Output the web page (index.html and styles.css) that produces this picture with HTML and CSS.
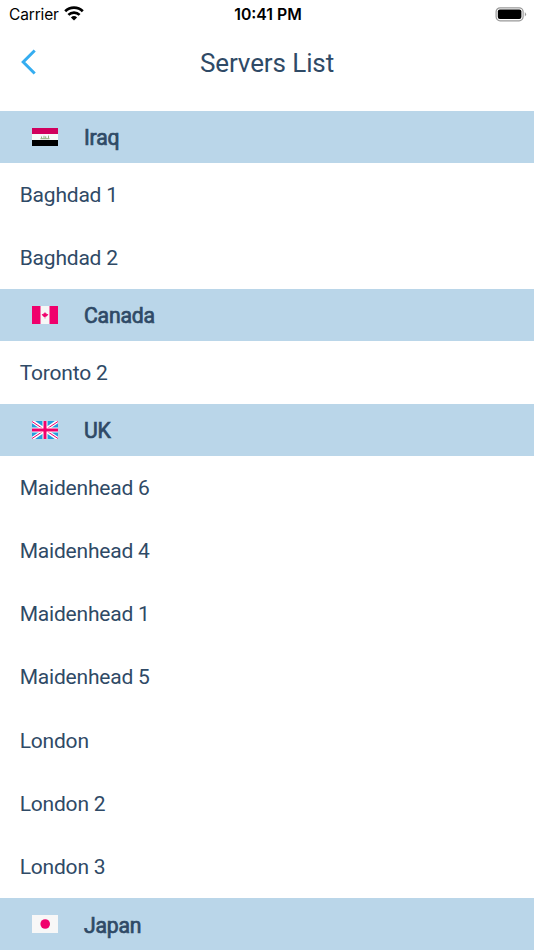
FILE: index.html
```html
<!DOCTYPE html>
<html lang="en">
<head>
<meta charset="utf-8">
<title>Servers List</title>
<link rel="stylesheet" href="styles.css">
</head>
<body>
<div class="status">
  <div class="carrier"><span>Carrier</span>
    <svg class="wifi" width="20" height="15" viewBox="0 0 20 15"><path d="M10 14.500 6.900 11.400a4.500 4.500 0 0 1 6.200 0Z" fill="#000"/><path d="M4.400 8.900a8 8 0 0 1 11.200 0M1.200 5.200a12.600 12.600 0 0 1 17.600 0" fill="none" stroke="#000" stroke-width="2.700"/></svg>
  </div>
  <div class="time">10:41 PM</div>
  <svg class="battery" width="32" height="15" viewBox="0 0 32 15"><rect x="1.100" y=".8" width="27" height="13" rx="4" fill="none" stroke="#999" stroke-width="1.200"/><rect x="2.800" y="2.500" width="23.600" height="9.600" rx="2"/><path d="M29.800 5q2.600 2.300 0 4.600Z" fill="#999"/></svg>
</div>
<header class="bar">
  <svg class="back" width="17" height="26" viewBox="0 0 17 26"><path d="M14.700 1.500 3.200 13 14.700 24.500" fill="none" stroke="#35adf0" stroke-width="3"/></svg>
  <h1>Servers List</h1>
</header>
<main>
  <section>
    <h2><svg class="flag" viewBox="0 0 26 18"><path fill="#f7f9f9" d="M0 0h26v18H0z"/><path fill="#d1005d" d="M0 0h26v6H0z"/><path d="M0 12h26v6H0z"/><path d="M8.500 10.600h9" stroke="#a3bd91" stroke-width="1.300"/><path d="M9.500 10.500V8.500M12 10.500V7.800M13.700 10.500V8.300M16.500 10.500V7.600" stroke="#94b283" stroke-width="1"/></svg><span>Iraq</span></h2>
    <div class="row">Baghdad 1</div>
    <div class="row">Baghdad 2</div>
  </section>
  <section>
    <h2><svg class="flag" viewBox="0 0 26 18"><path fill="#f7f7f7" d="M0 0h26v18H0z"/><path fill="#f0006c" d="M0 0h8.500v18H0zM17.500 0H26v18h-8.500zM13 6l.9 1.500.7-.3v1l1.700-.1-.5 1.200-1.700 1.500h-.8V12.500h-.6V11h-.8L10.200 9.300l-.5-1.200 1.700.1V7.200l.7.300z"/></svg><span>Canada</span></h2>
    <div class="row">Toronto 2</div>
  </section>
  <section>
    <h2><svg class="flag" viewBox="0 0 26 18"><path fill="#259bdc" d="M0 0h26v18H0z"/><path d="M0 0l26 18M26 0L0 18" stroke="#fff" stroke-width="3.500"/><path d="M0 .5l26 17M26 .5L0 17.500" stroke="#f0006c" stroke-width="1"/><path d="M13 0v18M0 9h26" stroke="#fff" stroke-width="5"/><path d="M13 0v18M0 9h26" stroke="#f0006c" stroke-width="3"/></svg><span>UK</span></h2>
    <div class="row">Maidenhead 6</div>
    <div class="row">Maidenhead 4</div>
    <div class="row">Maidenhead 1</div>
    <div class="row">Maidenhead 5</div>
    <div class="row">London</div>
    <div class="row">London 2</div>
    <div class="row">London 3</div>
  </section>
  <section>
    <h2><svg class="flag" viewBox="0 0 26 18"><path fill="#f7f7f7" d="M0 0h26v18H0z"/><circle cx="13.200" cy="9" r="4.800" fill="#f0006c"/></svg><span>Japan</span></h2>
  </section>
</main>
</body>
</html>
```
FILE: styles.css
```css
* { box-sizing: border-box; }
body { margin: 0; height: 950px; overflow: hidden; background: #fff; color: #2f4a66; font-family: Roboto, sans-serif; }
.status { height: 28px; display: grid; grid-template-columns: 1fr auto 1fr; align-items: center; padding: 0 7px 0 9px; color: #000; font: 16px/28px Inter, sans-serif; }
.carrier { display: flex; align-items: center; gap: 5px; font-size: 15.5px; letter-spacing: -.15px; }
.carrier span { padding-top: 1px; }
.wifi { margin-top: -2px; }
.time { font-weight: 600; font-size: 15.8px; padding-top: 1px; }
.battery { justify-self: end; margin: -1px 0 0; }
.bar { height: 83px; display: grid; grid-template-columns: 1fr auto 1fr; align-items: start; padding: 20px 20px 0; }
.back { margin-top: 1px; }
h1 { margin: 0; font-size: 26px; font-weight: 400; line-height: 30px; letter-spacing: -.1px; }
h2 { margin: 0; height: 51.65px; display: flex; align-items: center; padding-left: 32px; gap: 26px; background: #bad6e9; font-size: 21.2px; font-weight: 400; -webkit-text-stroke: .7px #2f4a66; letter-spacing: -.2px; }
h2 span { padding-top: 2px; }
.flag { width: 26px; height: 18px; }
.row { height: 63.25px; line-height: 63.25px; padding: 1px 0 0 19.7px; font-size: 21px; letter-spacing: -.2px; }
```
